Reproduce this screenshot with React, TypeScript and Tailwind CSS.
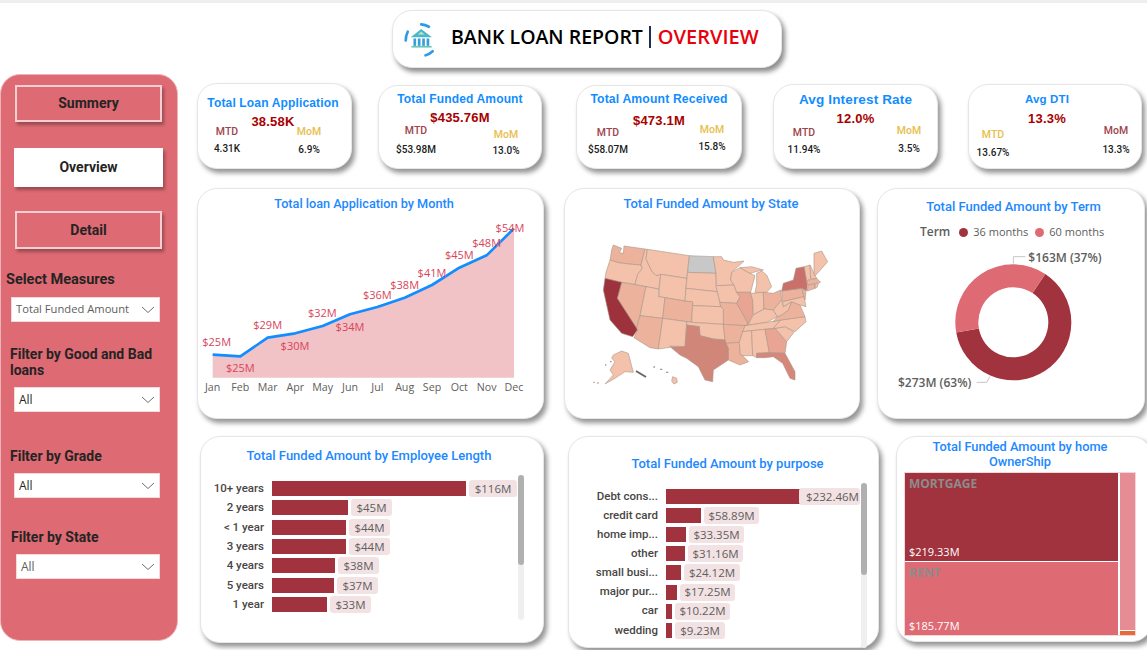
const din = "font-['Roboto',sans-serif]";
const segoe = "font-['Open_Sans',sans-serif]";
const arial = "font-['Liberation_Sans',Arial,sans-serif]";
const shadow = "shadow-[3px_4px_5px_rgba(0,0,0,0.42)]";

function Chevron() {
  return (
    <svg width="14" height="8" viewBox="0 0 14 8" className="shrink-0" fill="none" stroke="#605e5c" strokeWidth="0.9">
      <path d="M1 1l6 5.5L13 1" />
    </svg>
  );
}

function Dropdown({ value, className, textClass }: { value: string; className: string; textClass: string }) {
  return (
    <div className={`flex h-[25px] items-center justify-between border border-[#f4d9db] bg-white pl-[4px] pr-[4px] ${segoe} ${className}`}>
      <span className={textClass}>{value}</span>
      <Chevron />
    </div>
  );
}

function NavButton({ label, className }: { label: string; className: string }) {
  return (
    <div className={`flex items-center justify-center text-[14px] font-bold text-[#252423] shadow-[2px_3px_3px_rgba(0,0,0,0.3)] ${din} ${className}`}>
      {label}
    </div>
  );
}

function FilterTitle({ children, className }: { children: React.ReactNode; className: string }) {
  return <div className={`font-bold text-[#252423] ${din} ${className}`}>{children}</div>;
}

function Sidebar() {
  return (
    <aside className="flex h-[567px] w-[178px] shrink-0 flex-col rounded-[20px] border border-[#efb4b9] bg-[#de6a73]">
      <NavButton label="Summery" className="ml-[14px] mt-[10px] h-[37px] w-[147px] border-[2px] border-[#f5cfd2]" />
      <NavButton label="Overview" className="ml-[13px] mt-[26px] h-[39px] w-[149px] bg-white" />
      <NavButton label="Detail" className="ml-[14px] mt-[24px] h-[38px] w-[147px] border-[2px] border-[#f5cfd2]" />
      <FilterTitle className="ml-[5px] mt-[22px] h-[18px] text-[14.5px] leading-[18px]">Select Measures</FilterTitle>
      <Dropdown value="Total Funded Amount" className="ml-[10px] mt-[8px] w-[149px]" textClass="text-[11.2px] text-[#605e5c]" />
      <FilterTitle className="ml-[9px] mt-[24px] w-[155px] text-[14px] leading-[16px]">Filter by Good and Bad loans</FilterTitle>
      <Dropdown value="All" className="ml-[13px] mt-[9px] w-[146px]" textClass="text-[12px] text-[#252423]" />
      <FilterTitle className="ml-[9px] mt-[35px] h-[18px] text-[14px] leading-[18px]">Filter by Grade</FilterTitle>
      <Dropdown value="All" className="ml-[13px] mt-[8px] w-[146px]" textClass="text-[12px] text-[#252423]" />
      <FilterTitle className="ml-[10px] mt-[30px] h-[18px] text-[14px] leading-[18px]">Filter by State</FilterTitle>
      <Dropdown value="All" className="ml-[15px] mt-[8px] w-[144px]" textClass="text-[12px] text-[#605e5c]" />
    </aside>
  );
}

type Kpi = {
  title: string;
  value: string;
  card: string;
  titleClass: string;
  valueClass: string;
  left: { label: string; color: string; labelClass: string; value: string; valueClass: string; col: string };
  right: { label: string; color: string; labelClass: string; value: string; valueClass: string; col: string };
};

const red = "text-[#a0434d]";
const gold = "text-[#e8be4e]";

const kpis: Kpi[] = [
  {
    title: "Total Loan Application",
    value: "38.58K",
    card: "ml-[19px] w-[155px] h-[86px]",
    titleClass: "mt-[12px] text-[12px] pr-[3px]",
    valueClass: "mt-[4px] pr-[3px]",
    left: { label: "MTD", color: red, labelClass: "-mt-[5px]", value: "4.31K", valueClass: "mt-[3px]", col: "ml-[4px]" },
    right: { label: "MoM", color: gold, labelClass: "-mt-[5px]", value: "6.9%", valueClass: "mt-[4px]", col: "ml-[32px]" },
  },
  {
    title: "Total Funded Amount",
    value: "$435.76M",
    card: "ml-[26px] mt-[2px] w-[164px] h-[84px]",
    titleClass: "mt-[6px] text-[12px]",
    valueClass: "mt-[4px]",
    left: { label: "MTD", color: red, labelClass: "-mt-[2px]", value: "$53.98M", valueClass: "mt-[5px]", col: "ml-[12px]" },
    right: { label: "MoM", color: gold, labelClass: "mt-[2px]", value: "13.0%", valueClass: "mt-[2px]", col: "ml-[40px]" },
  },
  {
    title: "Total Amount Received",
    value: "$473.1M",
    card: "ml-[34px] mt-[2px] w-[166px] h-[84px]",
    titleClass: "mt-[6px] text-[12.2px]",
    valueClass: "mt-[7px]",
    left: { label: "MTD", color: red, labelClass: "-mt-[3px]", value: "$58.07M", valueClass: "mt-[3px]", col: "ml-[6px]" },
    right: { label: "MoM", color: gold, labelClass: "-mt-[6px]", value: "15.8%", valueClass: "mt-[3px]", col: "ml-[54px]" },
  },
  {
    title: "Avg Interest Rate",
    value: "12.0%",
    card: "ml-[31px] mt-[1px] w-[165px] h-[85px]",
    titleClass: "mt-[8px] text-[13.5px]",
    valueClass: "mt-[4px]",
    left: { label: "MTD", color: red, labelClass: "-mt-[1px]", value: "11.94%", valueClass: "mt-[3px]", col: "ml-[5px]" },
    right: { label: "MoM", color: gold, labelClass: "-mt-[3px]", value: "3.5%", valueClass: "mt-[4px]", col: "ml-[55px]" },
  },
  {
    title: "Avg DTI",
    value: "13.3%",
    card: "ml-[30px] mt-[1px] w-[174px] h-[85px]",
    titleClass: "mt-[7px] text-[11.5px] pr-[16px]",
    valueClass: "mt-[5px] pr-[16px]",
    left: { label: "MTD", color: gold, labelClass: "mt-[1px]", value: "13.67%", valueClass: "mt-[4px]", col: "-ml-[1px]" },
    right: { label: "MoM", color: red, labelClass: "-mt-[3px]", value: "13.3%", valueClass: "mt-[5px]", col: "ml-[73px]" },
  },
];

function KpiCard({ kpi }: { kpi: Kpi }) {
  return (
    <div className={`box-border shrink-0 rounded-[20px] border border-[#e6e6e6] bg-white ${shadow} ${kpi.card}`}>
      <div className={`h-[14px] text-center font-bold leading-[14px] tracking-[0.15px] text-[#118dff] ${arial} ${kpi.titleClass}`}>{kpi.title}</div>
      <div className={`h-[16px] text-center text-[13px] font-bold leading-[16px] tracking-[0.2px] text-[#a80000] ${arial} ${kpi.valueClass}`}>{kpi.value}</div>
      <div className="flex">
        {[kpi.left, kpi.right].map((c) => (
          <div key={c.label} className={`w-[50px] shrink-0 text-center ${din} ${c.col}`}>
            <div className={`h-[14px] text-[10.5px] font-medium leading-[14px] ${c.color} ${c.labelClass}`}>{c.label}</div>
            <div className={`h-[14px] text-[10px] font-medium leading-[14px] text-[#1c1c1c] ${c.valueClass}`}>{c.value}</div>
          </div>
        ))}
      </div>
    </div>
  );
}

function ChartTitle({ children, className }: { children: React.ReactNode; className: string }) {
  return <div className={`text-center font-medium leading-[15px] text-[#2188ff] ${din} ${className}`}>{children}</div>;
}

const months = ["Jan", "Feb", "Mar", "Apr", "May", "Jun", "Jul", "Aug", "Sep", "Oct", "Nov", "Dec"];
const lineX = [68, 151, 233, 316, 398, 480, 562, 644, 726, 808, 890, 972];
const lineY = [509, 514, 458, 445, 423, 388, 366, 338, 300, 248, 211, 130];
const monthLabels = [
  ["$25M", 80, 472],
  ["$25M", 151, 550],
  ["$29M", 233, 420],
  ["$30M", 315, 483],
  ["$32M", 397, 384],
  ["$34M", 480, 426],
  ["$36M", 562, 330],
  ["$38M", 644, 300],
  ["$41M", 726, 264],
  ["$45M", 808, 210],
  ["$48M", 890, 174],
  ["$54M", 960, 130],
] as const;

function MonthChart() {
  const pts = lineX.map((x, i) => `${x},${lineY[i]}`).join(" ");
  return (
    <svg width="345" height="200" viewBox="24 90 1035 600" className={`block ${segoe}`}>
      <polygon points={`68,578 ${pts} 972,578`} fill="#f1c2c6" />
      <polyline points={pts} fill="none" stroke="#118dff" strokeWidth="8" strokeLinejoin="round" />
      {monthLabels.map(([t, x, y], i) => (
        <text key={i} x={x} y={y + 11} textAnchor="middle" fontSize="33" fill="#d8455a">
          {t}
        </text>
      ))}
      {months.map((m, i) => (
        <text key={m} x={lineX[i]} y={617} textAnchor="middle" fontSize="32" fill="#605e5c">
          {m}
        </text>
      ))}
    </svg>
  );
}

const L = "#f4c2aa";
const M = "#edb29c";
const states: [string, string, string][] = [
  ["WA", "160,180 185,190 178,203 190,205 192,183 255,192 243,240 205,237 175,233 150,225 155,195", M],
  ["OR", "150,225 175,233 205,237 243,240 247,250 233,268 225,298 185,292 135,280 138,262", L],
  ["ID", "255,192 262,193 258,222 275,258 288,272 302,268 296,312 258,305 225,298 233,268 247,250 243,240", L],
  ["MT", "262,193 388,212 380,280 302,268 288,272 275,258 258,222", L],
  ["WY", "302,268 380,280 375,348 315,338 296,335", L],
  ["NV", "185,292 258,305 240,392 236,405 230,430 172,340", M],
  ["UT", "258,305 296,312 296,335 315,338 308,400 240,392", L],
  ["CO", "315,338 375,348 398,350 395,412 308,400", M],
  ["AZ", "240,392 308,400 295,492 270,488 222,458 232,435 230,430 236,405", M],
  ["NM", "308,400 380,410 375,485 330,483 330,487 295,492", L],
  ["ND", "388,212 460,215 468,265 383,262", "#c8c8c8"],
  ["SD", "383,262 468,265 468,305 472,320 378,310", L],
  ["NE", "378,310 472,320 482,365 398,362 398,350 375,348", L],
  ["MN", "460,215 485,215 490,225 520,232 552,228 515,262 512,285 522,300 470,302 468,265", L],
  ["IA", "468,305 470,302 522,300 530,322 540,335 530,355 480,352 472,320", L],
  ["MO", "480,352 530,355 545,380 560,408 565,418 555,422 490,418 490,372 482,365", M],
  ["KS", "398,362 482,365 490,372 490,418 395,412", L],
  ["OK", "380,410 395,412 490,418 495,465 460,462 420,452 418,425 380,420", L],
  ["AR", "490,418 555,422 538,472 498,475 495,465", M],
  ["LA", "498,475 538,472 541,505 566,530 540,540 505,525 505,490", M],
  ["TX", "380,420 418,425 420,452 460,462 495,465 498,475 505,490 505,525 460,555 458,590 435,585 415,545 380,520 360,510 330,485 375,485", "#d08678"],
  ["WI", "515,262 540,248 565,262 585,272 572,322 530,322 522,300 512,285", L],
  ["IL", "530,322 572,322 578,345 580,385 565,418 560,408 545,380 530,355 540,335", "#e8a594"],
  ["MIu", "540,248 575,245 610,255 595,258 570,265", L],
  ["MIl", "590,265 605,258 620,270 635,305 620,322 585,322 590,300", L],
  ["IN", "572,325 610,322 612,372 580,390 578,345", L],
  ["OH", "610,322 640,325 662,315 665,345 640,375 612,372", M],
  ["KY", "565,418 580,390 612,372 640,375 652,395 620,412 555,422", L],
  ["TN", "555,422 620,412 662,405 640,430 548,440", L],
  ["MS", "548,440 575,437 578,512 555,512 541,510 538,472", L],
  ["AL", "575,437 615,433 628,503 590,505 590,518 578,512", L],
  ["GA", "615,433 645,430 680,470 675,505 628,503", "#e8a594"],
  ["FL", "590,505 628,503 675,505 705,560 705,585 690,580 668,535 640,515 615,518 590,518", "#d6877a"],
  ["SC", "645,430 675,425 702,442 680,470", L],
  ["NC", "640,430 662,405 735,395 738,410 705,440 675,425 645,430", L],
  ["VA", "652,395 665,390 685,375 695,350 720,360 735,395 662,405 640,410", M],
  ["WV", "640,375 665,345 670,365 695,350 685,375 665,390 652,395", L],
  ["PA", "665,318 725,310 732,335 668,350", M],
  ["MD", "668,350 732,335 738,365 720,360 695,350 670,365", L],
  ["NY", "670,295 700,285 708,250 733,245 742,300 740,318 725,310 665,318", "#c9706a"],
  ["NJ", "725,310 738,320 735,345 732,335", M],
  ["VT", "733,245 750,240 752,282 740,287", L],
  ["NH", "750,240 762,265 770,280 752,282", L],
  ["ME", "762,205 785,198 803,230 775,262 765,272 762,265", L],
  ["MA", "740,287 770,280 782,292 744,300", M],
  ["CT", "744,300 765,297 765,310 742,318", M],
  ["RI", "765,297 775,295 772,306 765,310", L],
  ["AK", "160,510 185,498 205,505 220,562 195,560 165,580 135,597 160,570 150,555 165,530 155,520", L],
  ["HI", "338,575 350,580 352,592 342,597 335,588", L],
  ["CA", "135,280 185,292 172,340 230,430 232,435 218,455 185,445 150,405 140,360 130,315", "#9e323c"],
];

function StateMap() {
  return (
    <svg width="294" height="200" viewBox="15 90 882 600" className="block">
      {states.map(([id, pts, fill]) => (
        <polygon key={id} points={pts} fill={fill} stroke="#a8968a" strokeWidth="1.8" strokeLinejoin="round" />
      ))}
      <path d="M228 558l30 18" stroke="#6a6462" strokeWidth="6" />
      <path d="M100 592h4M112 594h4M135 540h4M150 530h5M280 546h5M300 553h7M318 562h7" stroke="#a8968a" strokeWidth="4" />
    </svg>
  );
}

function TermChart() {
  const arc = (a: number, b: number) => {
    const p = (d: number) => {
      const r = ((d - 90) * Math.PI) / 180;
      return `${430 + 139.5 * Math.cos(r)} ${412 + 139.5 * Math.sin(r)}`;
    };
    return `M${p(a)} A139.5 139.5 0 ${b - a > 180 ? 1 : 0} 1 ${p(b)}`;
  };
  return (
    <svg width="266" height="170" viewBox="24 171 798 510" className={`block ${segoe}`}>
      <path d={arc(33.4, 260)} fill="none" stroke="#a0333e" strokeWidth="69" />
      <path d={arc(260, 393.4)} fill="none" stroke="#de6a73" strokeWidth="69" />
      <path d="M430 236V215H466M360 574L350 592H320" fill="none" stroke="#c8c6c4" strokeWidth="3" />
      <text x="475" y="230" fontSize="36" fontWeight="600" fill="#605e5c">
        $163M (37%)
      </text>
      <text x="84" y="605" fontSize="36" fontWeight="600" fill="#605e5c">
        $273M (63%)
      </text>
    </svg>
  );
}

type Row = { label: string; bar: number; pill: string; pillW: number; overlap?: boolean };

const employment: Row[] = [
  { label: "10+ years", bar: 194, pill: "$116M", pillW: 48 },
  { label: "2 years", bar: 76, pill: "$45M", pillW: 41 },
  { label: "< 1 year", bar: 74, pill: "$44M", pillW: 41 },
  { label: "3 years", bar: 74, pill: "$44M", pillW: 41 },
  { label: "4 years", bar: 63, pill: "$38M", pillW: 41 },
  { label: "5 years", bar: 62, pill: "$37M", pillW: 41 },
  { label: "1 year", bar: 55, pill: "$33M", pillW: 41 },
];

const purposes: Row[] = [
  { label: "Debt cons...", bar: 139, pill: "$232.46M", pillW: 61, overlap: true },
  { label: "credit card", bar: 35, pill: "$58.89M", pillW: 55 },
  { label: "home imp...", bar: 20, pill: "$33.35M", pillW: 55 },
  { label: "other", bar: 19, pill: "$31.16M", pillW: 55 },
  { label: "small busi...", bar: 15, pill: "$24.12M", pillW: 56 },
  { label: "major pur...", bar: 11, pill: "$17.25M", pillW: 55 },
  { label: "car", bar: 6, pill: "$10.22M", pillW: 55 },
  { label: "wedding", bar: 6, pill: "$9.23M", pillW: 50 },
];

function BarRows({ rows, labelClass, pitch }: { rows: Row[]; labelClass: string; pitch: string }) {
  return (
    <div className="flex w-full flex-col">
      {rows.map((r) => (
        <div key={r.label} className={`flex items-center ${pitch}`}>
          <div className={`shrink-0 pr-[8px] text-right text-[11.5px] font-medium text-[#484644] ${din} ${labelClass}`}>{r.label}</div>
          <div className="h-[15px] shrink-0 bg-[#a0333e]" style={{ width: r.bar }} />
          <div
            className={`flex h-[17px] shrink-0 items-center justify-center rounded-[3px] bg-[#f3e2e4] text-[11.5px] text-[#605e5c] ${segoe} ${r.overlap ? "-ml-[6px] pl-[6px]" : "ml-[3px]"}`}
            style={{ width: r.pillW }}
          >
            {r.pill}
          </div>
        </div>
      ))}
    </div>
  );
}

function ScrollBar({ className, thumb }: { className: string; thumb: string }) {
  return (
    <div className={`w-[6px] shrink-0 rounded-[3px] bg-[#efefef] ${className}`}>
      <div className={`w-[6px] rounded-[3px] bg-[#b0b0b0] ${thumb}`} />
    </div>
  );
}

function BankIcon() {
  return (
    <svg width="37" height="37" viewBox="60 60 110 110" className="ml-[7px] shrink-0">
      <g fill="none" stroke="#2f9be8" strokeWidth="8" strokeLinecap="round">
        <path d="M123 70q12 1 23 7" />
        <path d="M83 92q-6 12-6 26" />
        <path d="M136 162q12-3 21-12" />
      </g>
      <polygon points="92,108 123,84 155,108" fill="#4fb6c9" />
      <polygon points="113,100 123,92 133,100" fill="#bfe8c8" />
      <rect x="100" y="112" width="8" height="22" fill="#3a9fd8" />
      <rect x="113" y="112" width="8" height="22" fill="#3a9fd8" />
      <rect x="126" y="112" width="8" height="22" fill="#3a9fd8" />
      <rect x="139" y="112" width="8" height="22" fill="#3a9fd8" />
      <rect x="94" y="134" width="60" height="5" fill="#6cc5b8" />
    </svg>
  );
}

export default function App() {
  return (
    <div className="h-[650px] w-[1147px] overflow-hidden bg-white">
      <div className="h-[3px] bg-[#eeeeee]" />
      <header className="ml-[392px] mt-[7px] flex h-[58px] w-[390px] items-center rounded-[20px] border border-[#e6e6e6] bg-white shadow-[3px_4px_5px_rgba(0,0,0,0.45)]">
        <BankIcon />
        <div className={`-mt-[5px] ml-[14px] flex items-center whitespace-nowrap font-semibold leading-[28px] ${segoe}`}>
          <span className="text-[19.5px] text-black">BANK LOAN REPORT</span>
          <span className="ml-[6px] mr-[7px] h-[22px] w-[2px] bg-[#1c2f55]" />
          <span className="text-[20px] text-[#e8000b]">OVERVIEW</span>
        </div>
      </header>
      <div className="mt-[6px] flex">
        <Sidebar />
        <main className="flex min-w-0 flex-1 flex-col">
          <section className="mt-[9px] flex h-[86px] items-start">
            {kpis.map((k) => (
              <KpiCard key={k.title} kpi={k} />
            ))}
          </section>
          <section className="mt-[19px] flex h-[231px] items-start">
            <div className={`ml-[19px] box-border h-[231px] w-[347px] shrink-0 rounded-[20px] border border-[#e6e6e6] bg-white ${shadow}`}>
              <ChartTitle className="mt-[7px] mb-[1px] h-[18px] pr-[13px] text-[12.7px]">Total loan Application by Month</ChartTitle>
              <MonthChart />
            </div>
            <div className={`ml-[20px] box-border h-[231px] w-[296px] shrink-0 rounded-[20px] border border-[#e6e6e6] bg-white ${shadow}`}>
              <ChartTitle className="mt-[7px] mb-[1px] h-[18px] pr-[2px] text-[13px]">Total Funded Amount by State</ChartTitle>
              <StateMap />
            </div>
            <div className={`ml-[17px] box-border h-[231px] w-[268px] shrink-0 rounded-[20px] border border-[#e6e6e6] bg-white ${shadow}`}>
              <ChartTitle className="mt-[10px] h-[16px] pl-[5px] text-[13px]">Total Funded Amount by Term</ChartTitle>
              <div className={`mb-[3px] mt-[10px] flex h-[14px] items-center pl-[42px] text-[11px] leading-[14px] text-[#605e5c] ${segoe}`}>
                <span className="text-[12px] font-semibold">Term</span>
                <span className="ml-[9px] h-[9px] w-[9px] rounded-full bg-[#a0333e]" />
                <span className="ml-[5px] w-[56px] whitespace-nowrap">36 months</span>
                <span className="ml-[6px] h-[9px] w-[9px] rounded-full bg-[#de6a73]" />
                <span className="ml-[5px]">60 months</span>
              </div>
              <TermChart />
            </div>
          </section>
          <section className="mt-[17px] flex items-start">
            <div className={`ml-[22px] box-border h-[207px] w-[344px] shrink-0 rounded-[20px] border border-[#e6e6e6] bg-white ${shadow}`}>
              <ChartTitle className="mt-[11px] h-[16px] pr-[6px] text-[13px]">Total Funded Amount by Employee Length</ChartTitle>
              <div className="mt-[11px] flex">
                <div className="w-[317px] shrink-0 pt-[4px]">
                  <BarRows rows={employment} labelClass="w-[71px]" pitch="h-[19.33px]" />
                </div>
                <ScrollBar className="h-[145px]" thumb="h-[90px]" />
              </div>
            </div>
            <div className={`ml-[24px] box-border h-[212px] w-[311px] shrink-0 rounded-[20px] border border-[#e6e6e6] bg-white ${shadow}`}>
              <ChartTitle className="mt-[19px] h-[16px] pl-[8px] text-[13px]">Total Funded Amount by purpose</ChartTitle>
              <div className="mt-[11px] flex">
                <div className="w-[292px] shrink-0 pt-[4px]">
                  <BarRows rows={purposes} labelClass="w-[97px]" pitch="h-[19.1px]" />
                </div>
                <ScrollBar className="h-[165px]" thumb="h-[92px]" />
              </div>
            </div>
            <div className={`ml-[17px] box-border h-[206px] w-[256px] shrink-0 rounded-[20px] border border-[#e6e6e6] bg-white ${shadow}`}>
              <ChartTitle className="mt-[2px] mb-[1px] h-[30px] pr-[8px] text-[12.8px]">
                Total Funded Amount by home
                <br />
                OwnerShip
              </ChartTitle>
              <div className="ml-[7px] mt-[3px] flex h-[164px] w-[232px] gap-[2px] border border-[#f3d6d8] bg-white">
                <div className="flex w-[213px] shrink-0 flex-col gap-[1px]">
                  <div className={`flex h-[88px] flex-col justify-between bg-[#a0333e] px-[4px] pb-[1px] pt-[2px] ${segoe}`}>
                    <span className="text-[12px] font-bold text-[#8c8c8c]">MORTGAGE</span>
                    <span className="text-[11px] text-white">$219.33M</span>
                  </div>
                  <div className={`flex flex-1 flex-col justify-between bg-[#de6a73] px-[4px] pb-[1px] pt-[2px] ${segoe}`}>
                    <span className="text-[12px] font-bold text-[#8c8c8c]">RENT</span>
                    <span className="text-[11px] text-white">$185.77M</span>
                  </div>
                </div>
                <div className="flex flex-1 flex-col gap-[1px]">
                  <div className="flex-1 bg-[#e68c94]" />
                  <div className="h-[4px] bg-[#e66c37]" />
                </div>
              </div>
            </div>
          </section>
        </main>
      </div>
    </div>
  );
}
